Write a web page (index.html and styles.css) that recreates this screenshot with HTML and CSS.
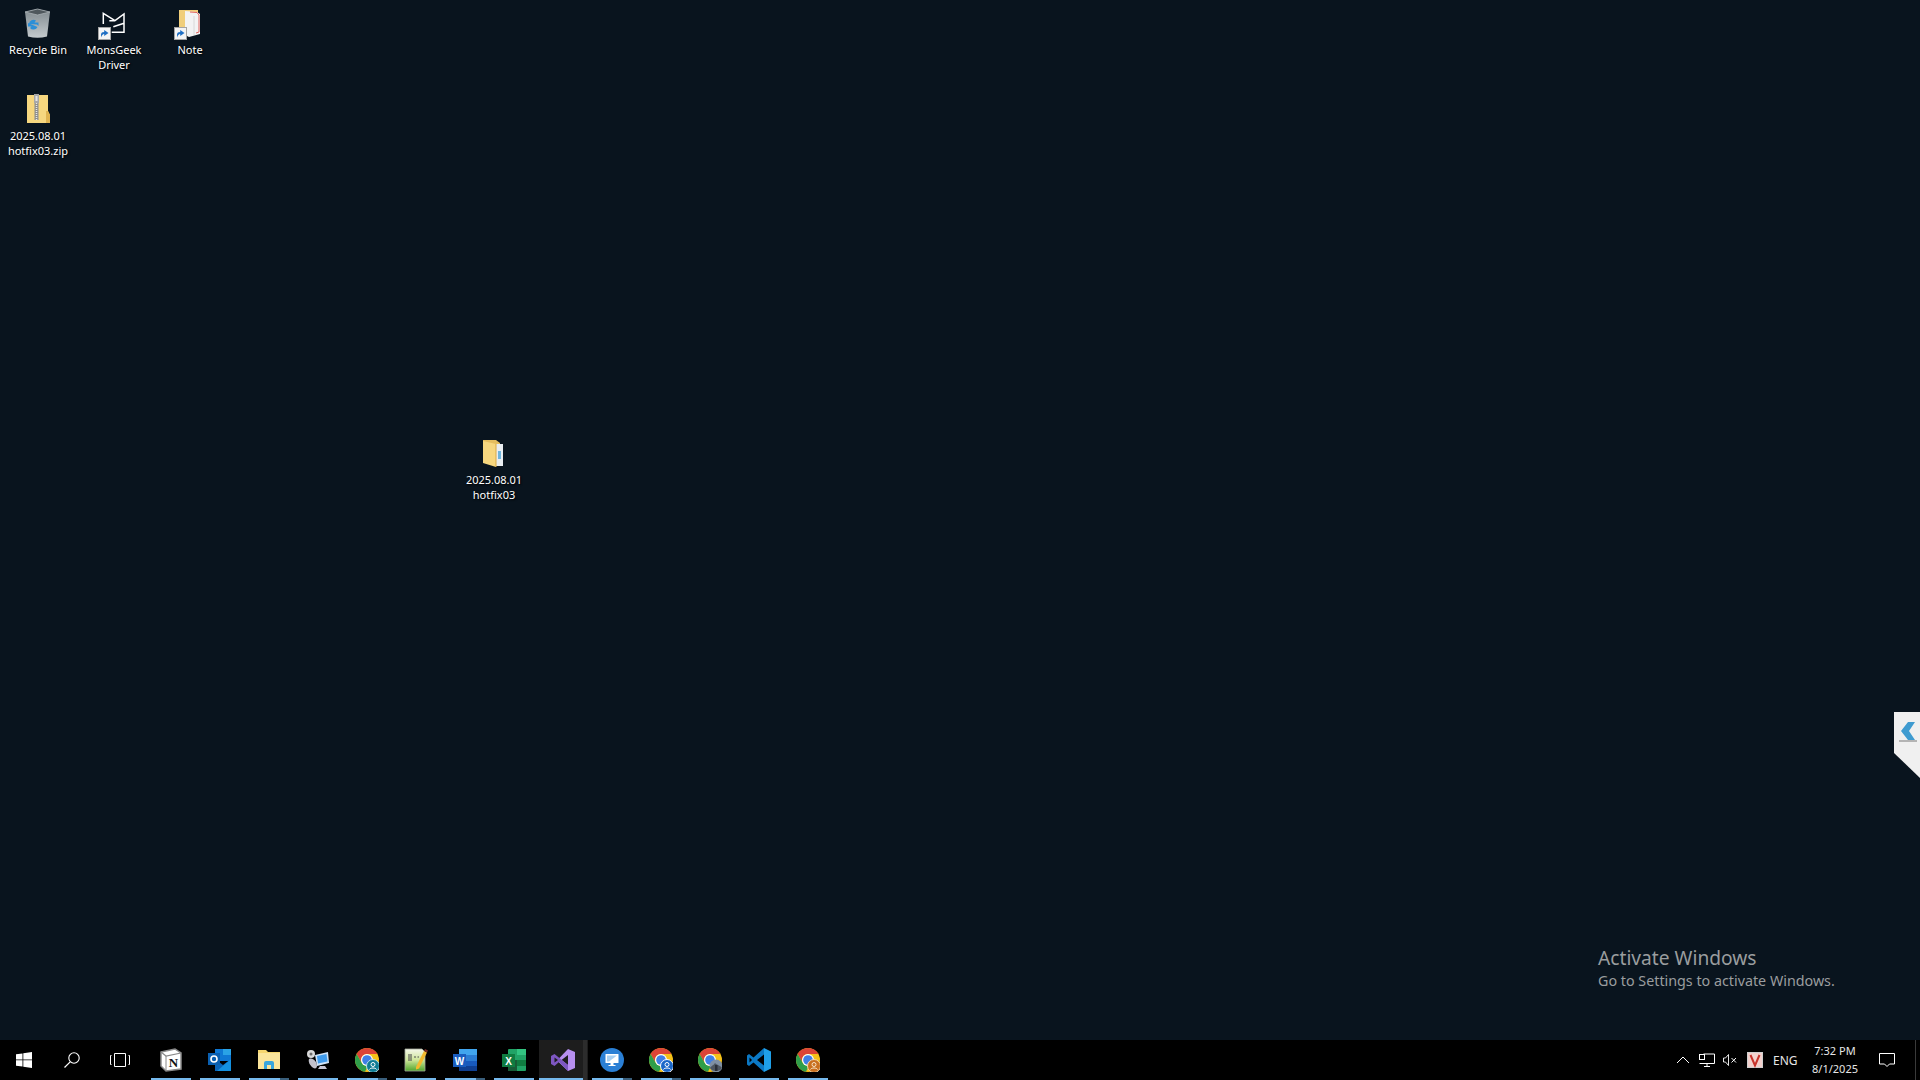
FILE: index.html
```html
<!DOCTYPE html>
<html lang="en">
<head>
    <meta charset="UTF-8">
    <meta name="viewport" content="width=device-width, initial-scale=1.0">
    <title>Desktop</title>
    <link rel="stylesheet" href="styles.css">
</head>
<body>
<svg class="defs" width="0" height="0" aria-hidden="true">
    <defs>
        <linearGradient id="noteGreen" x1="0" y1="0" x2="0" y2="1">
            <stop offset="0" stop-color="#f4f7ea"/>
            <stop offset="0.5" stop-color="#cfe69a"/>
            <stop offset="1" stop-color="#4fa52b"/>
        </linearGradient>
        <linearGradient id="binBody" x1="0" y1="0" x2="0" y2="1">
            <stop offset="0" stop-color="#7f898e"/>
            <stop offset="1" stop-color="#c4cacd"/>
        </linearGradient>
        <symbol id="shortcut" viewBox="0 0 13 13">
            <rect x="0.5" y="0.5" width="12" height="12" fill="#f4f4f4" stroke="#a4a4a4"/>
            <path d="M3 10.500V7.500C3 5.800 4.400 5 6.200 5V3L10.500 6L6.200 9V7C4.800 7 3.800 8.200 3 10.500Z" fill="#1f6fc4"/>
        </symbol>
        <symbol id="chrome" viewBox="0 0 24 24">
            <circle cx="12" cy="12" r="12" fill="#f5c118"/>
            <path d="M12 0A12 12 0 0 1 22.400 6H12A6 6 0 0 0 6.800 15L1.600 6A12 12 0 0 1 12 0Z" fill="#dc4437"/>
            <path d="M1.600 6L6.800 15A6 6 0 0 0 13 17.900L9.900 23.800A12 12 0 0 1 1.600 6Z" fill="#2f9e4a"/>
            <circle cx="12" cy="12" r="6" fill="#fff"/>
            <circle cx="12" cy="12" r="4.800" fill="#3f7fe6"/>
        </symbol>
    </defs>
</svg>

<div class="desktop">
    <div class="desk-item item-bin">
        <svg class="desk-icon" viewBox="0 0 32 32">
            <path d="M3 4L15.500 1L28 4L25 28.500Q15.500 31 6 28.500Z" fill="url(#binBody)"/>
            <path d="M3 4L15.500 1L28 4L15.500 7Z" fill="#4f585d" stroke="#aab1b5" stroke-width="0.800"/>
            <path d="M7 16A4.500 4.500 0 0 1 14 12.500L12.500 14.500H16.500V18L15 16.500" fill="#2b8fd8"/>
            <path d="M15.500 19A4.500 4.500 0 0 1 8 20L9.500 18.500H6V15" fill="#2b8fd8"/>
        </svg>
        <span>Recycle Bin</span>
    </div>
    <div class="desk-item item-mons">
        <svg class="desk-icon" viewBox="0 0 32 32">
            <path d="M5.300 16V5.300L17 12.700L26 6V24.300H13.700M11.300 12.700H17M15.300 18.700L26 15.300" fill="none" stroke="#fff" stroke-width="1.500"/>
            <use href="#shortcut" x="0" y="19" width="13" height="13"/>
        </svg>
        <span>MonsGeek Driver</span>
    </div>
    <div class="desk-item item-note">
        <svg class="desk-icon" viewBox="0 0 32 32">
            <path d="M5 2H24V26H5Z" fill="#f0ce7a"/>
            <path d="M11 3L23 4L26 6V26L15 29L11 27Z" fill="#f3f3f3"/>
            <path d="M16 4L23 4.500L25 7V24L22 25" fill="none" stroke="#e0645f" stroke-width="1"/>
            <path d="M20 27V8" stroke="#d8d8d8" stroke-width="1"/>
            <use href="#shortcut" x="0" y="19" width="13" height="13"/>
        </svg>
        <span>Note</span>
    </div>
    <div class="desk-item item-zip">
        <svg class="desk-icon" viewBox="0 0 32 32">
            <path d="M5 1H26V17L28 21V29H5Z" fill="#f6d77f"/>
            <path d="M24 17H26L28 21V29H24Z" fill="#e0b451"/>
            <rect x="12" y="0" width="5" height="9" fill="#a8a8a8"/>
            <rect x="13.500" y="2" width="2" height="5" fill="#e6e6e6"/>
            <path d="M12.500 9H16.500V26H12.500Z" fill="#8d8d8d"/>
            <path d="M14.500 9V26" stroke="#e8e8e8" stroke-width="1.500" stroke-dasharray="1 1"/>
        </svg>
        <span>2025.08.01 hotfix03.zip</span>
    </div>
    <div class="desk-item item-folder">
        <svg class="desk-icon" viewBox="0 0 32 32">
            <path d="M5 2H18L22 5V25H5Z" fill="#e5bd5e"/>
            <rect x="18" y="6" width="7" height="22" fill="#e9edf0"/>
            <rect x="20" y="13" width="3" height="8" fill="#6fb4dc"/>
            <path d="M5 3L18 6V29L5 25Z" fill="#f7d77f"/>
            <path d="M18 6V29" stroke="#d9a944" stroke-width="1"/>
        </svg>
        <span>2025.08.01 hotfix03</span>
    </div>
</div>

<div class="side-tab">
    <svg class="side-arrow" viewBox="0 0 14 18">
        <path d="M7 0H14L8 9L14 18H7L0 9Z" fill="#3f9bd0"/>
    </svg>
</div>

<div class="watermark">
    <div class="wm-title">Activate Windows</div>
    <div class="wm-sub">Go to Settings to activate Windows.</div>
</div>

<div class="taskbar">
    <div class="slot sys">
        <svg class="tb-icon" viewBox="0 0 16 16"><path d="M0 2.300L6.500 1.400V7.500H0ZM7.300 1.300L16 0V7.500H7.300ZM0 8.300H6.500V14.600L0 13.700ZM7.300 8.300H16V16L7.300 14.800Z" fill="#fff"/></svg>
    </div>
    <div class="slot sys">
        <svg class="tb-icon" viewBox="0 0 16 16"><circle cx="10" cy="6" r="5.200" fill="none" stroke="#fff" stroke-width="1.100"/><path d="M6.200 9.800L0.500 15.500" stroke="#fff" stroke-width="1.200"/></svg>
    </div>
    <div class="slot sys last">
        <svg class="tb-icon wide" viewBox="0 0 20 14"><path d="M4.500 0.500H15.500V13.500H4.500ZM1.500 2.500H0.500V11.500H1.500M18.500 2.500H19.500V11.500H18.500" fill="none" stroke="#fff" stroke-width="1"/></svg>
    </div>
    <div class="slot on">
        <svg class="app-icon notion" viewBox="0 0 24 24"><path d="M2 4L16 1L22 5V21L7 23L2 18Z" fill="#fff" stroke="#8a8a8a" stroke-width="1.500"/><path d="M2 4L7 8L22 5" fill="none" stroke="#8a8a8a" stroke-width="1.200"/><path d="M7 8V23" stroke="#8a8a8a" stroke-width="1"/><text x="14.500" y="19" class="notion-n">N</text></svg>
    </div>
    <div class="slot on">
        <svg class="app-icon" viewBox="0 0 24 24">
            <rect x="7" y="1" width="16" height="12" fill="#0f78d4"/>
            <rect x="15" y="1" width="8" height="6" fill="#2aa3e6"/>
            <path d="M7 11L15 17L23 11V23H7Z" fill="#0a64b8"/>
            <path d="M23 11V23H9Z" fill="#1490df"/>
            <rect x="0" y="5" width="12" height="12" fill="#0a5fb0"/>
            <circle cx="6" cy="11" r="3" fill="none" stroke="#fff" stroke-width="1.600"/>
        </svg>
    </div>
    <div class="slot on stack">
        <svg class="app-icon" viewBox="0 0 24 24">
            <path d="M1 2H9L11 4H23V21H1Z" fill="#f6d66f"/>
            <path d="M1 5H23V21H1Z" fill="#fbe59b"/>
            <path d="M7 21V15A2 2 0 0 1 9 13H15A2 2 0 0 1 17 15V21H14V17H10V21Z" fill="#39a6dd"/>
        </svg>
    </div>
    <div class="slot on">
        <svg class="app-icon" viewBox="0 0 24 24">
            <path d="M9 7L22 4L23 15L11 18Z" fill="#cfe3f7"/>
            <path d="M11 8L20.500 6L21.500 13.500L12 15.500Z" fill="#3f9bec"/>
            <path d="M14 18H19L21 21H12Z" fill="#c6c6d4"/>
            <circle cx="5" cy="6" r="4" fill="#d8d8d8"/>
            <circle cx="5" cy="6" r="1.500" fill="#6b6b6b"/>
            <path d="M3 11C7 9 11 14 11 18C11 21 8 21 6 19C4 17 2 14 3 11Z" fill="#c2c2cc"/>
        </svg>
    </div>
    <div class="slot on stack">
        <svg class="app-icon" viewBox="0 0 24 24">
            <use href="#chrome" width="24" height="24"/>
            <circle cx="18" cy="18" r="6.500" fill="#0f7c94" stroke="#bde3ec" stroke-width="1"/>
            <circle cx="18" cy="16.500" r="2" fill="none" stroke="#fff" stroke-width="1"/>
            <path d="M14.500 21.500C15 19.500 21 19.500 21.500 21.500" fill="none" stroke="#fff" stroke-width="1"/>
        </svg>
    </div>
    <div class="slot on">
        <svg class="app-icon" viewBox="0 0 24 24">
            <path d="M1 1H18L21 4V23H1Z" fill="url(#noteGreen)" stroke="#a3a89a" stroke-width="0.800"/>
            <path d="M5 6V13M7 6V13M10 9H12M13.500 9H15" stroke="#4f4f4f" stroke-width="1.100"/>
            <path d="M12 19L20 3L23 4.500L15 20.500L12 21.500Z" fill="#f2b92e"/>
            <path d="M20 3L21 1L24 2.500L23 4.500Z" fill="#7a2c24"/>
        </svg>
    </div>
    <div class="slot on stack">
        <svg class="app-icon" viewBox="0 0 24 24">
            <rect x="6" y="1" width="18" height="22" rx="1" fill="#2b7cd3"/>
            <rect x="6" y="1" width="18" height="6" fill="#41a5ee"/>
            <rect x="6" y="13" width="18" height="5" fill="#185abd"/>
            <rect x="6" y="18" width="18" height="5" fill="#103f91"/>
            <rect x="0" y="6" width="13" height="13" fill="#1a5dbf"/>
            <text x="6.500" y="16.500" class="tile-letter">W</text>
        </svg>
    </div>
    <div class="slot on">
        <svg class="app-icon" viewBox="0 0 24 24">
            <rect x="6" y="1" width="18" height="22" rx="1" fill="#21a366"/>
            <rect x="15" y="1" width="9" height="6" fill="#33c481"/>
            <rect x="6" y="12" width="9" height="11" fill="#185c37"/>
            <rect x="15" y="12" width="9" height="6" fill="#107c41"/>
            <rect x="0" y="6" width="13" height="13" fill="#107c41"/>
            <text x="6.500" y="16.500" class="tile-letter">X</text>
        </svg>
    </div>
    <div class="slot on active stack">
        <svg class="app-icon" viewBox="0 0 24 24">
            <path d="M17 1L24 4V20L17 23L6 12.500Z" fill="#b78ff0"/>
            <path d="M17 7V17L10.500 12Z" fill="#1d1d1d"/>
            <path d="M0 8L3.500 6L17 17V23L8 14L3.500 18L0 16Z" fill="#7e57c2"/>
            <path d="M3.500 9.500L7 12L3.500 14.500Z" fill="#1d1d1d"/>
        </svg>
    </div>
    <div class="slot on stack">
        <svg class="app-icon" viewBox="0 0 24 24">
            <circle cx="12" cy="12" r="12" fill="#2a7fd5"/>
            <rect x="5.500" y="6" width="13" height="9" rx="0.500" fill="#fff"/>
            <path d="M7 7.500H17L9 13.500H7Z" fill="#a9d0f2"/>
            <path d="M10.500 15H13.500V17H15.500V18H8.500V17H10.500Z" fill="#fff"/>
        </svg>
    </div>
    <div class="slot on stack">
        <svg class="app-icon" viewBox="0 0 24 24">
            <use href="#chrome" width="24" height="24"/>
            <circle cx="18" cy="18" r="6.500" fill="#1a66c8" stroke="#fff" stroke-width="1"/>
            <circle cx="18" cy="16.500" r="2" fill="none" stroke="#fff" stroke-width="1"/>
            <path d="M14.500 21.500C15 19.500 21 19.500 21.500 21.500" fill="none" stroke="#fff" stroke-width="1"/>
        </svg>
    </div>
    <div class="slot on">
        <svg class="app-icon" viewBox="0 0 24 24">
            <use href="#chrome" width="24" height="24"/>
            <circle cx="18" cy="18" r="6.500" fill="#7f8fa3"/>
            <path d="M12 20C14 17 15 18 17 15C19 17 22 17 24 20C22 24 14 24 12 20Z" fill="#4d5560"/>
            <rect x="17" y="17" width="2.500" height="6" fill="#2b2f38"/>
        </svg>
    </div>
    <div class="slot on">
        <svg class="app-icon" viewBox="0 0 24 24">
            <path d="M17 0L24 3.500V20.500L17 24V17.500V6.500Z" fill="#1f9fe8"/>
            <path d="M17 0L6.500 9.500L2 6L0 7.500V16.500L2 18L6.500 14.500L17 24V17.500L10 12L17 6.500Z" fill="#0b78c4"/>
            <path d="M2.500 9.500L5 12L2.500 14.500Z" fill="#000"/>
        </svg>
    </div>
    <div class="slot on">
        <svg class="app-icon" viewBox="0 0 24 24">
            <use href="#chrome" width="24" height="24"/>
            <circle cx="18" cy="18" r="6.500" fill="#c96f1e" stroke="#f4d6ae" stroke-width="1"/>
            <circle cx="18" cy="16.500" r="2" fill="none" stroke="#f6e3c8" stroke-width="1"/>
            <path d="M14.500 21.500C15 19.500 21 19.500 21.500 21.500" fill="none" stroke="#f6e3c8" stroke-width="1"/>
        </svg>
    </div>

    <div class="tray">
        <svg class="tray-icon chev" viewBox="0 0 14 14"><path d="M1 10L7 4L13 10" fill="none" stroke="#fff" stroke-width="1"/></svg>
        <svg class="tray-icon net" viewBox="0 0 16 14"><path d="M4.500 1H15.500V10.500H0.500" fill="none" stroke="#fff"/><rect x="0.500" y="1.500" width="5" height="5" fill="#000" stroke="#fff"/><path d="M8 10.500V13.500M5 13.500H11" fill="none" stroke="#fff"/></svg>
        <svg class="tray-icon vol" viewBox="0 0 14 14"><path d="M0.500 5H2.500L5.500 1.500V12.500L2.500 9H0.500Z" fill="none" stroke="#fff" stroke-width="0.900"/><path d="M8.500 5L13 9.500M13 5L8.500 9.500" stroke="#fff" stroke-width="1"/></svg>
        <svg class="tray-icon app" viewBox="0 0 16 16"><rect width="16" height="16" fill="#f2d0cc"/><rect x="0.500" y="0.500" width="15" height="15" fill="none" stroke="#cfcfcf"/><path d="M3.500 3L8 13.500L12.500 3" fill="none" stroke="#c6322a" stroke-width="2"/></svg>
        <span class="lang">ENG</span>
        <div class="clock">
            <div>7:32 PM</div>
            <div>8/1/2025</div>
        </div>
        <svg class="tray-icon note" viewBox="0 0 16 14"><path d="M0.500 0.500H15.500V11H10.500L8 13.500L5.500 11H0.500Z" fill="none" stroke="#fff"/></svg>
        <div class="show-desktop"></div>
    </div>
</div>
</body>
</html>
```

FILE: styles.css
```css
html, body {
    margin: 0;
    height: 100%;
}
body {
    width: 1920px;
    height: 1080px;
    background: #09141e;
    font-family: "Noto Sans", "Open Sans", sans-serif;
    color: #fff;
    overflow: hidden;
    display: flex;
    flex-direction: column;
    position: relative;
}
.defs {
    position: absolute;
}

/* desktop icons sit on a free canvas */
.desktop {
    flex: 1;
    position: relative;
}
.desk-item {
    position: absolute;
    width: 76px;
    display: flex;
    flex-direction: column;
    align-items: center;
    text-align: center;
    font-size: 11px;
    line-height: 15px;
    text-shadow: 1px 1px 2px #000;
}
.desk-icon {
    width: 32px;
    height: 32px;
    margin-bottom: 2px;
}
.desk-item span {
    display: block;
    width: 66px;
}
.item-bin { left: 0; top: 8px; }
.item-mons { left: 76px; top: 8px; }
.item-note { left: 152px; top: 8px; }
.item-zip { left: 0; top: 94px; }
.item-folder { left: 456px; top: 438px; }

.side-tab {
    position: absolute;
    right: 0;
    top: 712px;
    width: 26px;
    height: 66px;
    background: #f0f0f0;
    clip-path: polygon(0 0, 100% 0, 100% 100%, 0 62%);
}
.side-tab::after {
    content: "";
    position: absolute;
    left: 5px;
    top: 28px;
    width: 18px;
    height: 2px;
    background: #b4b4b4;
}
.side-arrow {
    position: absolute;
    left: 7px;
    top: 10px;
    width: 14px;
    height: 18px;
}

.watermark {
    position: absolute;
    left: 1598px;
    top: 944px;
    color: #9a9d9f;
}
.wm-title {
    font-size: 19.200px;
    line-height: 28px;
}
.wm-sub {
    font-size: 14.300px;
    line-height: 17px;
}

.taskbar {
    height: 40px;
    background: #000;
    display: flex;
    flex: none;
}
.slot {
    width: 49px;
    flex: none;
    display: flex;
    align-items: center;
    justify-content: center;
    position: relative;
}
.slot.sys {
    width: 48px;
}
.slot.sys.last {
    margin-right: 3px;
}
.slot.on::after {
    content: "";
    position: absolute;
    left: 4px;
    width: 40px;
    bottom: 0;
    height: 2px;
    background: #76b9ed;
}
.slot.stack::before {
    content: "";
    position: absolute;
    right: 5px;
    width: 9px;
    bottom: 0;
    height: 2px;
    background: #3a5f7c;
    z-index: 1;
}
.slot.active {
    background: #1d1d1d;
}
.slot.active::after {
    left: 0;
    width: 44px;
}
.slot.active.stack::before {
    right: 1px;
    width: 4px;
    height: 100%;
    background: #2c2c2c;
}
.tb-icon {
    width: 16px;
    height: 16px;
}
.tb-icon.wide {
    width: 20px;
    height: 14px;
}
.app-icon {
    width: 24px;
    height: 24px;
    margin-right: 1px;
}
.notion-n {
    font-family: "Liberation Serif", serif;
    font-size: 13px;
    font-weight: 700;
    fill: #111;
    text-anchor: middle;
}
.tile-letter {
    font-family: "Liberation Sans", sans-serif;
    font-size: 10px;
    font-weight: 700;
    fill: #fff;
    text-anchor: middle;
}

.tray {
    margin-left: auto;
    display: flex;
    align-items: center;
}
.tray-icon {
    width: 14px;
    height: 14px;
}
.tray-icon.chev {
    margin-right: 9px;
}
.tray-icon.net {
    width: 16px;
    margin-right: 8px;
}
.tray-icon.vol {
    margin-right: 10px;
}
.tray-icon.app {
    width: 16px;
    height: 16px;
    margin-right: 10px;
}
.lang {
    font-size: 12px;
    color: #e6e6e6;
    width: 23px;
    white-space: nowrap;
    margin-right: 5px;
}
.clock {
    font-size: 11px;
    line-height: 18px;
    text-align: center;
    color: #e6e6e6;
    width: 68px;
    margin-right: 10px;
}
.tray-icon.note {
    width: 16px;
    margin-right: 20px;
}
.show-desktop {
    width: 1px;
    height: 100%;
    background: #3a3a3a;
    margin-right: 4px;
}
```
